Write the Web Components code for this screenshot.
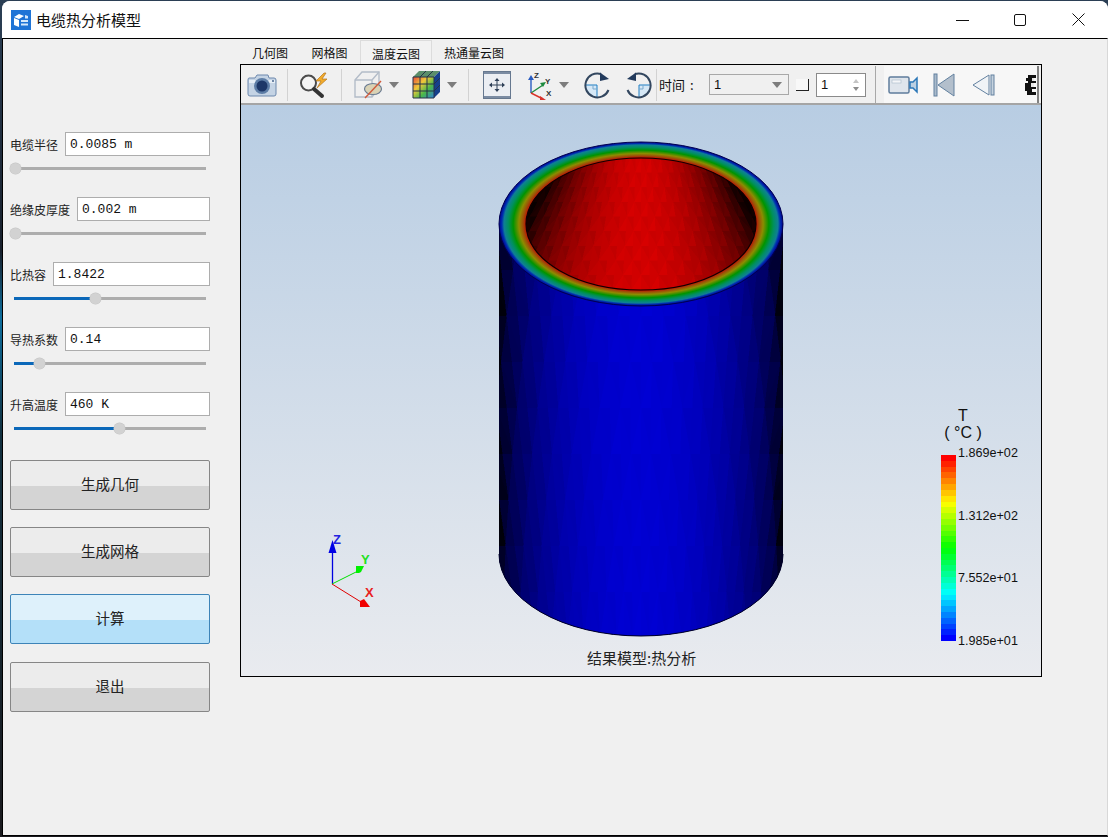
<!DOCTYPE html>
<html lang="zh">
<head>
<meta charset="utf-8">
<title>电缆热分析模型</title>
<style>
  html, body { margin: 0; height: 100%; }
  body {
    width: 1108px; height: 837px; overflow: hidden;
    background: linear-gradient(180deg, #2b3f55 0, #18202c 30%, #0e6f9e 38%, #12303f 52%, #1a1a1e 100%);
    font-family: "Noto Sans CJK SC", "Liberation Sans", sans-serif;
  }
</style>
</head>
<body>
<app-window title-text="电缆热分析模型">
  <side-panel>
    <param-row label="电缆半径" value="0.0085 m" knob="15"></param-row>
    <param-row label="绝缘皮厚度" value="0.002 m" knob="15"></param-row>
    <param-row label="比热容" value="1.8422" knob="95"></param-row>
    <param-row label="导热系数" value="0.14" knob="39"></param-row>
    <param-row label="升高温度" value="460 K" knob="119"></param-row>
    <push-button>生成几何</push-button>
    <push-button>生成网格</push-button>
    <push-button active>计算</push-button>
    <push-button>退出</push-button>
  </side-panel>
  <view-tabs>
    <tab-item>几何图</tab-item>
    <tab-item>网格图</tab-item>
    <tab-item selected>温度云图</tab-item>
    <tab-item>热通量云图</tab-item>
  </view-tabs>
  <view-frame>
    <tool-bar></tool-bar>
    <result-view>
      <axis-triad></axis-triad>
      <color-legend></color-legend>
    </result-view>
  </view-frame>
</app-window>

<script>
const icons = {
  camera: `<svg width="30" height="26" viewBox="0 0 30 26"><path d="M2 6h6l2-3h11l1 3h5q2 0 2 2v14q0 2-2 2H3q-2 0-2-2V8q0-2 1-2z" fill="#c4d3e4" stroke="#6c88ad"/><path d="M2 8h26v3H2z" fill="#e6eef6"/><circle cx="15" cy="14" r="8" fill="#5d7da6"/><circle cx="15" cy="14" r="5.5" fill="#1d3768"/><circle cx="26" cy="9" r="1" fill="#47658d"/></svg>`,
  zoom: `<svg width="31" height="28" viewBox="0 0 31 28"><circle cx="8.500" cy="12" r="7.500" fill="#f4f4f4" stroke="#4b4b4b" stroke-width="2"/><path d="M14 18l8 7" stroke="#333" stroke-width="4" stroke-linecap="round"/><path d="M24 2l-8 8h5l-4 7 10-9h-5l4-6z" fill="#f2ac2c" stroke="#b5761c" stroke-width=".7"/></svg>`,
  cube: `<svg width="30" height="29" viewBox="0 0 30 29"><path d="M2 10l7-8h17v16l-7 9H2z" fill="#f0f0f0" stroke="#b3bcc8" stroke-width="1.4"/><path d="M2 10h17v17M19 10l7-8" fill="none" stroke="#b3bcc8" stroke-width="1.4"/><ellipse cx="20" cy="19" rx="8.5" ry="5.5" fill="#d9d2b5" stroke="#6b7c92" stroke-width="1.2"/><path d="M12 28L28 11" stroke="#d05a3a" stroke-width="1.4"/></svg>`,
  grid: `<svg width="29" height="29" viewBox="0 0 29 29"><defs><linearGradient id="gf" x1="0" y1="0" x2="1" y2="1"><stop offset="0" stop-color="#e8493a"/><stop offset=".35" stop-color="#efc93a"/><stop offset=".65" stop-color="#49b84a"/><stop offset="1" stop-color="#2f7fd8"/></linearGradient></defs><path d="M7 1h21l-6 6H1z" fill="#5b8e6a"/><path d="M22 7l6-6v21l-6 6z" fill="#16408c"/><rect x="1" y="7" width="21" height="21" fill="url(#gf)"/><path d="M1 14h21M1 21h21M8 7v21M15 7v21M1 7h21v21H1zM8 7l6-6M15 7l6-6M22 14l6-6M22 21l6-6" stroke="#263248" fill="none"/></svg>`,
  move: `<svg width="28" height="28" viewBox="0 0 28 28"><rect x=".5" y=".5" width="27" height="27" fill="#ebeef3" stroke="#66788f"/><path d="M1 1h26v2H1zM1 25h26v2H1z" fill="#7b8ca3"/><path d="M14 7l-2.5 3h5zM14 21l-2.5-3h5zM6 14l3-2.5v5zM22 14l-3-2.5v5z" fill="#2f4159"/><path d="M14 9v10M8 14h12" stroke="#2f4159"/></svg>`,
  axes: `<svg width="30" height="30" viewBox="0 0 30 30"><path d="M5 23V8" stroke="#2a5cc0" stroke-width="1.4"/><path d="M5 5l-3 5h6z" fill="#2a5cc0"/><path d="M5 23l12-8" stroke="#1d8a3e" stroke-width="1.4"/><path d="M20 12l-6 1 3 4z" fill="#1d8a3e"/><path d="M5 23l12 6" stroke="#d9342c" stroke-width="1.4"/><path d="M20 30l-6-4 0 4z" fill="#d9342c"/><text x="8" y="8" font-family="Liberation Sans" font-weight="700" font-size="8" fill="#333">Z</text><text x="19" y="14" font-family="Liberation Sans" font-weight="700" font-size="8" fill="#333">Y</text><text x="20" y="26" font-family="Liberation Sans" font-weight="700" font-size="8" fill="#333">X</text></svg>`,
  rotcw: `<svg width="27" height="28" viewBox="0 0 27 28"><path d="M13 14V26A12 12 0 0 1 1.5 14z" fill="#d6e8f6"/><path d="M13 14H1.5M13 14v12" stroke="#1f7fc4"/><path d="M9 14v4h4" stroke="#7aa9cc" fill="none"/><path d="M17 3A12 12 0 1 0 24.500 19" fill="none" stroke="#33475f" stroke-width="2"/><path d="M16 1.500L25 8l-9 2z" fill="#223a5c"/></svg>`,
  rotccw: `<svg width="27" height="28" viewBox="0 0 27 28"><path d="M14 14V26A12 12 0 0 0 25.5 14z" fill="#d6e8f6"/><path d="M14 14h11.5M14 14v12" stroke="#1f7fc4"/><path d="M18 14v4h-4" stroke="#7aa9cc" fill="none"/><path d="M10 3A12 12 0 1 1 2.500 19" fill="none" stroke="#33475f" stroke-width="2"/><path d="M11 1.500L2 8l9 2z" fill="#223a5c"/></svg>`,
  video: `<svg width="31" height="20" viewBox="0 0 31 20"><rect x="1" y="2" width="20" height="16" rx="1.5" fill="#dfe5ec" stroke="#5f7c9c" stroke-width="1.5"/><rect x="4" y="5" width="9" height="3" fill="#f4f6f8" stroke="#a9b8c8" stroke-width=".6"/><path d="M22 7h3l4-4v14l-4-4h-3z" fill="#bcd0e2" stroke="#2d78b8" stroke-width="1.5"/></svg>`,
  first: `<svg width="22" height="24" viewBox="0 0 22 24"><rect x="1" y="1" width="3" height="22" fill="#a9bacb" stroke="#62809f"/><path d="M21 1v22L5 12z" fill="#b3bfcc" stroke="#62809f"/></svg>`,
  prev: `<svg width="24" height="22" viewBox="0 0 24 22"><path d="M17 1v20L1 11z" fill="#f0f3f6" stroke="#62809f"/><rect x="19" y="1" width="3" height="20" fill="#c5d2de" stroke="#62809f"/></svg>`,
  clipped: `<svg width="11" height="20" viewBox="0 0 11 20" shape-rendering="crispEdges"><path d="M3 0h8v3h-4v3h4v2H6v4h5v2H7v3h4v3H2v-4H0V8h3V6H1V3h2z" fill="#111"/><path d="M7 3h2v3H7zM6 8h3v4H6z" fill="#e8e8e8"/></svg>`
};

// Window frame: title bar on top, content in a grid of panel, tabs and view
customElements.define('app-window', class extends HTMLElement {
  constructor() {
    super();
    const title = this.getAttribute('title-text');
    this.attachShadow({ mode: 'open' }).innerHTML = `
      <style>
        :host { display: flex; flex-direction: column; width: 1106px; height: 835px; margin: 1px 0 0 2px; background: #f0f0f0; border-radius: 8px 8px 0 0; overflow: hidden; color: #111; }
        header { height: 37px; flex: none; background: #fff; display: flex; align-items: center; padding-left: 9px; font-size: 15px; }
        header svg.logo { margin-right: 5px; }
        .title { flex: 1; }
        .ctl { width: 58px; height: 37px; display: flex; align-items: center; justify-content: center; }
        main { flex: 1; display: grid; grid-template-columns: 237px 802px; grid-template-rows: 25px 613px; border: 1px solid #000; border-right-color: #d8d8d8; align-content: start; }
        ::slotted(side-panel) { grid-row: 1 / 3; }
      </style>
      <header>
        <svg class="logo" width="20" height="20" viewBox="0 0 20 20"><rect width="20" height="20" fill="#1f74d6"/><path d="M3 7l5-3 5 2-5 3zM3 8l5 2v7l-5-2z" fill="#fff"/><path d="M10 10h7v2h-7zM10 13.5h7v2h-7zM14 5l3 1v2.500h-3z" fill="#d5e8fb"/></svg>
        <span class="title">${title}</span>
        <span class="ctl"><svg width="13" height="12"><path d="M0 6.5h13" stroke="#111"/></svg></span>
        <span class="ctl"><svg width="13" height="13"><rect x=".5" y="1.5" width="11" height="11" rx="1.5" fill="none" stroke="#111"/></svg></span>
        <span class="ctl" style="margin-right:1px"><svg width="13" height="13"><path d="M.5.5l12 12M12.5.5l-12 12" stroke="#111"/></svg></span>
      </header>
      <main><slot></slot></main>`;
  }
});

customElements.define('side-panel', class extends HTMLElement {
  constructor() {
    super();
    this.attachShadow({ mode: 'open' }).innerHTML = `
      <style>
        :host { display: flex; flex-direction: column; padding: 93px 0 0 7px; width: 200px; }
        ::slotted(*) { flex: none; }
      </style>
      <slot></slot>`;
  }
});

customElements.define('param-row', class extends HTMLElement {
  constructor() {
    super();
    const knob = Number(this.getAttribute('knob'));
    const fill = knob > 15 ? knob - 14 : 0;
    this.attachShadow({ mode: 'open' }).innerHTML = `
      <style>
        :host { display: block; height: 65px; font-size: 12px; }
        .top { display: flex; align-items: center; gap: 7px; height: 24px; }
        label { color: #222; white-space: nowrap; }
        .field { flex: 1; box-sizing: border-box; height: 24px; border: 1px solid #adadad; background: #fff; padding: 1px 0 0 4px; font: 13px/22px "Liberation Mono", monospace; color: #111; white-space: pre; }
        .track { position: relative; margin: 11px 4px 0 4px; height: 3px; background: #adadad; }
        .fill { height: 3px; background: #0b68b9; width: ${fill}px; }
        .knob { position: absolute; top: -4px; left: ${knob - 19.5}px; width: 11px; height: 11px; border-radius: 50%; background: #d2d2d2; box-shadow: 0 0 0 .5px #c4c4c4; }
      </style>
      <div class="top"><label>${this.getAttribute('label')}</label><div class="field">${this.getAttribute('value')}</div></div>
      <div class="track"><div class="fill"></div><div class="knob"></div></div>`;
  }
});

customElements.define('push-button', class extends HTMLElement {
  constructor() {
    super();
    this.attachShadow({ mode: 'open' }).innerHTML = `
      <style>
        :host { display: flex; align-items: center; justify-content: center; box-sizing: border-box; height: 50px; margin: 3px 0 14px; padding-bottom: 4px; border: 1px solid #868686; border-radius: 2px; font-size: 14.5px; color: #222; background: linear-gradient(180deg, #ececec 0, #ececec 52%, #d4d4d4 52%, #d4d4d4 100%); }
        :host(:last-child) { margin-top: 4px; }
        :host([active]) { border-color: #3d84b8; background: linear-gradient(180deg, #def1fb 0, #def1fb 52%, #b4e0f9 52%, #b4e0f9 100%); }
      </style>
      <slot></slot>`;
  }
});

customElements.define('view-tabs', class extends HTMLElement {
  constructor() {
    super();
    this.attachShadow({ mode: 'open' }).innerHTML = `
      <style>
        :host { display: flex; align-items: flex-end; height: 25px; position: relative; z-index: 1; }
      </style>
      <slot></slot>`;
  }
});

customElements.define('tab-item', class extends HTMLElement {
  constructor() {
    super();
    this.attachShadow({ mode: 'open' }).innerHTML = `
      <style>
        :host { display: block; box-sizing: border-box; height: 23px; padding: 3px 11.5px 0 12px; font-size: 12px; line-height: 17px; color: #111; white-space: nowrap; }
        :host([selected]) { height: 24px; padding: 4px 11px 0; margin: 0 0 0 1px; background: #f2f2f2; border: 1px solid #dcdcdc; border-bottom: none; }
      </style>
      <slot></slot>`;
  }
});

customElements.define('view-frame', class extends HTMLElement {
  constructor() {
    super();
    this.attachShadow({ mode: 'open' }).innerHTML = `
      <style>
        :host { display: flex; flex-direction: column; box-sizing: border-box; width: 802px; height: 613px; border: 1px solid #000; background: #f0f0f0; }
      </style>
      <slot></slot>`;
  }
});

customElements.define('tool-bar', class extends HTMLElement {
  constructor() {
    super();
    const ic = (name, left) => `<span class="ic" style="margin-left:${left}px">${icons[name]}</span>`;
    const arrow = left => `<span class="ar" style="margin-left:${left}px"></span>`;
    const sep = left => `<span class="sep" style="margin-left:${left}px"></span>`;
    this.attachShadow({ mode: 'open' }).innerHTML = `
      <style>
        :host { display: flex; align-items: stretch; flex: none; height: 40px; box-sizing: border-box; padding-top: 1px; background: #f0f0f0; border-bottom: 2px solid #a5a5a5; font-size: 13px; color: #111; }
        .main { display: flex; align-items: center; width: 644px; flex: none; }
        .ic { display: flex; flex: none; }
        .ar { flex: none; width: 0; height: 0; border: 5.5px solid transparent; border-top: 6px solid #7d7d7d; border-bottom: 0; }
        .sep { flex: none; width: 1px; height: 32px; background: #d2d2d2; }
        .time { margin-left: 2px; width: 50px; flex: none; white-space: nowrap; }
        .time b { font-weight: 400; letter-spacing: 5px; }
        .combo { flex: none; box-sizing: border-box; width: 80px; height: 21px; border: 1px solid #a8a8a8; padding-left: 4px; font: 13px/19px "Liberation Sans", sans-serif; position: relative; }
        .combo i { position: absolute; right: 6px; top: 7px; border: 5px solid transparent; border-top: 6px solid #7d7d7d; border-bottom: 0; }
        .mark { flex: none; width: 13px; height: 12px; margin: 0 7px 0 7px; box-sizing: border-box; background: #f8f8f8; border-right: 1.5px solid #222; border-bottom: 1.5px solid #222; }
        .spin { flex: none; box-sizing: border-box; width: 50px; height: 24px; border: 1px solid #8a8a8a; background: #fff; padding-left: 4px; font: 13px/22px "Liberation Sans", sans-serif; position: relative; }
        .spin i { position: absolute; right: 6px; width: 0; height: 0; border: 3.5px solid transparent; }
        .spin .u { top: 5px; border-bottom: 4px solid #c4c4c4; border-top: 0; }
        .spin .d { bottom: 5px; border-top: 4px solid #8d8d8d; border-bottom: 0; }
        .sp { flex: none; width: 1px; height: 37px; background: #a8a8a8; margin-left: -10px; align-self: center; }
        .tail { flex: none; display: flex; align-items: center; width: 155px; margin-left: 8px; background: #f7f7f7; border-right: 2px solid #808080; box-sizing: border-box; overflow: hidden; }
      </style>
      <div class="main">
        ${ic('camera', 6)}${sep(10)}${ic('zoom', 12)}${sep(10)}${ic('cube', 11)}${arrow(6)}${ic('grid', 13)}${arrow(6)}${sep(11)}${ic('move', 14)}${ic('axes', 15)}${arrow(3)}${ic('rotcw', 15)}${ic('rotccw', 14)}${sep(4)}
        <span class="time">时<b>间</b>:</span>
        <span class="combo">1<i></i></span>
        <span class="mark"></span>
        <span class="spin">1<i class="u"></i><i class="d"></i></span>
      </div>
      <span class="sp"></span>
      <div class="tail">${ic('video', 4)}${ic('first', 14)}${ic('prev', 17)}${ic('clipped', 29)}</div>`;
  }
});

// Faceted wall: triangle strips fanning to an apex, darker towards both sides
function facets({ cx, halfW, top, bottom, apexY, refY, base, fanShade, wobble, gamma }) {
  const cols = 16, rows = 9;
  const pt = (u, v) => {
    const y = top + (bottom - top) * v;
    return [cx + (u / cols) * halfW * (y - apexY) / (refY - apexY), y];
  };
  const shade = (t, wob) => {
    const b = Math.max(.05, Math.cos(Math.min(1, t) * Math.PI / 2) ** gamma) * .82 + wob;
    return base(Math.max(8, Math.min(222, Math.round(b * 255))));
  };
  let out = '';
  for (let r = 0; r < rows; r++) {
    for (let c = -cols * 2; c < cols * 2; c++) {
      const a = pt(c, r / rows), b = pt(c + 1, r / rows), d = pt(c, (r + 1) / rows), e = pt(c + 1, (r + 1) / rows);
      const odd = Math.abs(c + r) % 2;
      const wob = odd ? wobble : -wobble;
      const tris = odd ? [[a, b, d], [b, d, e]] : [[a, b, e], [a, d, e]];
      tris.forEach((t, i) => {
        const mx = (t[0][0] + t[1][0] + t[2][0]) / 3;
        const tone = fanShade ? Math.abs(c + .5) / cols : Math.abs(mx - cx) / halfW;
        const fill = shade(tone, wob + (i ? wobble : -wobble));
        out += `<polygon points="${t.map(p => p.join(',')).join(' ')}" fill="${fill}" stroke="${fill}" stroke-width=".5"/>`;
      });
    }
  }
  return out;
}

customElements.define('result-view', class extends HTMLElement {
  constructor() {
    super();
    const red = v => `rgb(${v},0,0)`;
    const blue = v => `rgb(0,0,${v})`;
    this.attachShadow({ mode: 'open' }).innerHTML = `
      <style>
        :host { display: block; flex: 1; position: relative; overflow: hidden; background: linear-gradient(180deg, #b8cde3 0, #e9ebef 100%); }
        svg.scene { display: block; }
        .caption { position: absolute; left: 346px; top: 543px; font-size: 15px; line-height: 20px; color: #222; white-space: nowrap; }
      </style>
      <svg class="scene" width="800" height="571" viewBox="241 105 800 571">
        <defs>
          <radialGradient id="ring" cx=".5" cy=".5" r=".5">
            <stop offset=".805" stop-color="#c80000"/>
            <stop offset=".83" stop-color="#a04a08"/>
            <stop offset=".86" stop-color="#8c8c00"/>
            <stop offset=".90" stop-color="#009400"/>
            <stop offset=".935" stop-color="#009060"/>
            <stop offset=".965" stop-color="#0f7f96"/>
            <stop offset=".98" stop-color="#0030b0"/>
            <stop offset="1" stop-color="#000090"/>
          </radialGradient>
          <clipPath id="inner"><ellipse cx="641" cy="224" rx="115" ry="66"/></clipPath>
          <clipPath id="side"><path d="M499 224H783V554A142 82 0 0 1 499 554z"/></clipPath>
        </defs>
        <g clip-path="url(#side)" shape-rendering="crispEdges">
          <rect x="499" y="224" width="284" height="414" fill="#0000a8"/>
          ${facets({ cx: 641, halfW: 142, top: 224, bottom: 638, apexY: 1500, refY: 560, base: blue, fanShade: false, wobble: .006, gamma: .5 })}
        </g>
        <path d="M499 554A142 82 0 0 0 783 554" fill="none" stroke="#000024" stroke-width="1"/>
        <ellipse cx="641" cy="224" rx="142" ry="82" fill="url(#ring)" stroke="#000050" stroke-width="1"/>
        <g clip-path="url(#inner)" shape-rendering="crispEdges">
          <rect x="526" y="158" width="230" height="132" fill="#c00000"/>
          ${facets({ cx: 641, halfW: 115, top: 158, bottom: 290, apexY: 5, refY: 224, base: red, fanShade: true, wobble: .012, gamma: .75 })}
        </g>
        <ellipse cx="641" cy="224" rx="115" ry="66" fill="none" stroke="#100000" stroke-width="1.2"/>
      </svg>
      <div class="caption">结果模型:热分析</div>
      <slot></slot>`;
  }
});

customElements.define('axis-triad', class extends HTMLElement {
  constructor() {
    super();
    const label = (x, y, color, t) => `<text x="${x}" y="${y}" fill="${color}" font-family="Liberation Sans, sans-serif" font-weight="700" font-size="13">${t}</text>`;
    this.attachShadow({ mode: 'open' }).innerHTML = `
      <style>
        :host { display: block; position: absolute; left: 78px; top: 424px; width: 60px; height: 85px; }
      </style>
      <svg width="60" height="85" viewBox="0 0 60 85">
        <path d="M13.5 55V20" stroke="#0000e0" stroke-width="1.3"/>
        <path d="M13.5 11l-4 13h8z" fill="#0000e6"/>
        ${label(14, 15, '#2222e0', 'Z')}
        <path d="M13 55l28-14" stroke="#00e000"/>
        <path d="M37 37h8l-3 6-2 1h-3z" fill="#00f000"/>
        ${label(42, 35, '#22e022', 'Y')}
        <path d="M13 55l29 18" stroke="#e00000"/>
        <path d="M41 72l4-2 6 8H41z" fill="#f00000"/>
        ${label(46, 68, '#e82020', 'X')}
      </svg>`;
  }
});

customElements.define('color-legend', class extends HTMLElement {
  constructor() {
    super();
    const stops = [[0, [255, 0, 0]], [.25, [255, 255, 0]], [.5, [0, 255, 0]], [.75, [0, 255, 255]], [1, [0, 0, 255]]];
    const colorAt = t => {
      for (let i = 1; i < stops.length; i++) {
        if (t <= stops[i][0]) {
          const k = (t - stops[i - 1][0]) / .25;
          return stops[i - 1][1].map((v, j) => Math.round(v + (stops[i][1][j] - v) * k));
        }
      }
      return stops[4][1];
    };
    let bands = '';
    for (let i = 0; i < 32; i++) bands += `<i style="background:rgb(${colorAt(i / 31).join(',')})"></i>`;
    this.attachShadow({ mode: 'open' }).innerHTML = `
      <style>
        :host { display: block; position: absolute; left: 690px; top: 302px; width: 100px; color: #111; font-family: "Liberation Sans", sans-serif; }
        .unit { text-align: center; width: 64px; line-height: 17px; font-size: 16px; }
        .body { display: flex; margin: 14px 0 0 10px; }
        .bar { width: 15px; height: 186px; display: flex; flex-direction: column; }
        .bar i { flex: 1; display: block; }
        .ticks { display: flex; flex-direction: column; justify-content: space-between; margin: -10px 0 -8px 2px; font-size: 12.6px; line-height: 16px; white-space: nowrap; }
      </style>
      <div class="unit">T<br>( °C )</div>
      <div class="body">
        <div class="bar">${bands}</div>
        <div class="ticks"><span>1.869e+02</span><span>1.312e+02</span><span>7.552e+01</span><span>1.985e+01</span></div>
      </div>`;
  }
});
</script>
</body>
</html>
